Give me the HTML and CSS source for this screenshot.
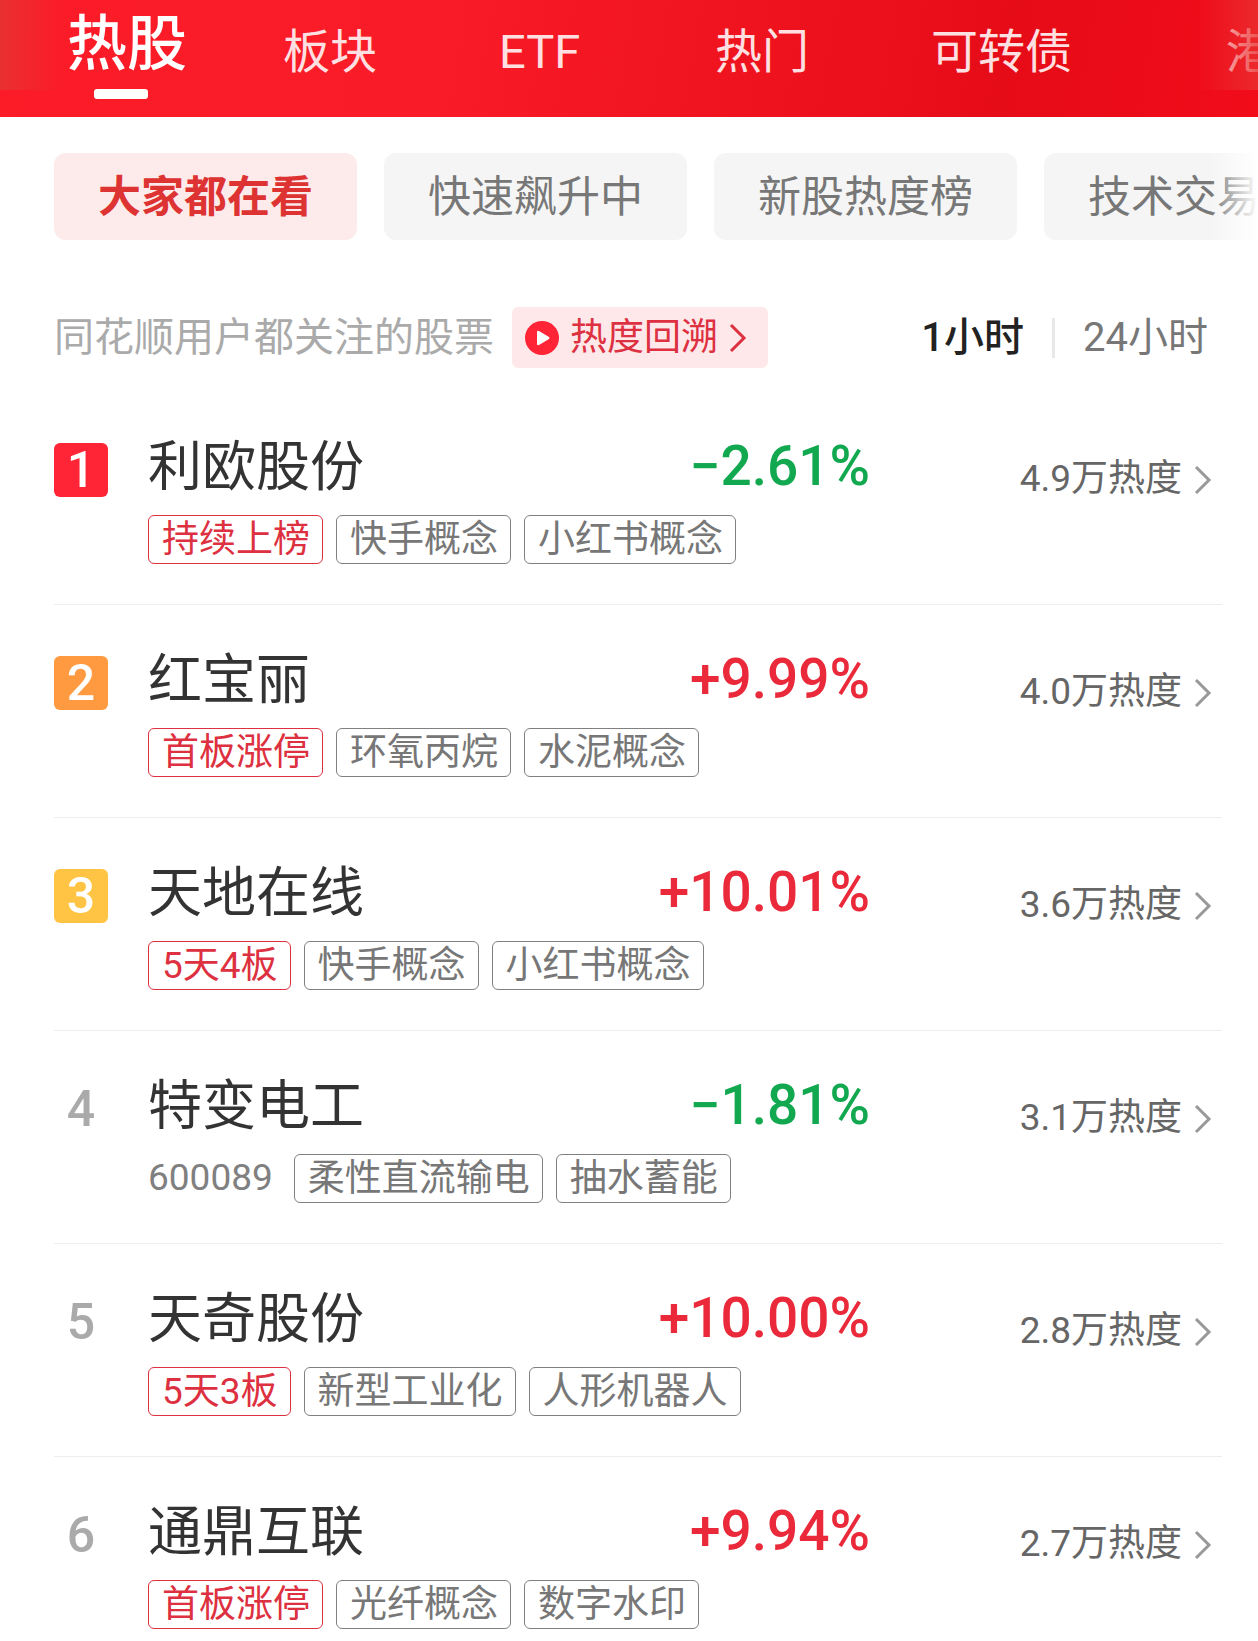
FILE: index.html
```html
<!DOCTYPE html>
<html lang="zh-CN">
<head>
    <meta charset="UTF-8">
    <meta name="viewport" content="width=device-width, initial-scale=1.0">
    <title>热股</title>
    <link rel="stylesheet" href="styles.css">
</head>
<body>
    <svg class="defs" width="0" height="0" aria-hidden="true">
        <symbol id="arrow" viewBox="0 0 18 30">
            <path d="M2 2 L15 15 L2 28" fill="none" stroke="currentColor" stroke-width="3"/>
        </symbol>
    </svg>

    <header class="topbar">
        <nav class="tabs">
            <a class="tab active" href="#hot">热股</a>
            <a class="tab" href="#sector">板块</a>
            <a class="tab" href="#etf">ETF</a>
            <a class="tab" href="#popular">热门</a>
            <a class="tab wide" href="#bond">可转债</a>
            <a class="tab" href="#hk">港股</a>
        </nav>
    </header>

    <main>
        <div class="chips">
            <button class="chip active">大家都在看</button>
            <button class="chip">快速飙升中</button>
            <button class="chip">新股热度榜</button>
            <button class="chip">技术交易派</button>
        </div>

        <div class="toolbar">
            <p class="desc">同花顺用户都关注的股票</p>
            <button class="replay">
                <svg class="play" viewBox="0 0 34 34" aria-hidden="true">
                    <circle cx="17" cy="17" r="17" fill="#ff2436"/>
                    <path d="M12 11 Q12 9 14 10 L24 16 Q25 17 24 18 L14 24 Q12 25 12 23 Z" fill="#fff"/>
                </svg>
                <span>热度回溯</span>
                <svg class="arrow" aria-hidden="true"><use href="#arrow"/></svg>
            </button>
            <div class="period">
                <button class="period-btn active">1小时</button>
                <button class="period-btn">24小时</button>
            </div>
        </div>

        <ol class="list">
            <li class="row">
                <span class="rank rank-1">1</span>
                <div class="stock">
                    <div class="head"><h2 class="name">利欧股份</h2><span class="change down">−2.61%</span></div>
                    <div class="tags"><span class="tag hot">持续上榜</span><span class="tag">快手概念</span><span class="tag">小红书概念</span></div>
                </div>
                <a class="heat" href="#1">4.9万热度<svg class="arrow" aria-hidden="true"><use href="#arrow"/></svg></a>
            </li>
            <li class="row">
                <span class="rank rank-2">2</span>
                <div class="stock">
                    <div class="head"><h2 class="name">红宝丽</h2><span class="change up">+9.99%</span></div>
                    <div class="tags"><span class="tag hot">首板涨停</span><span class="tag">环氧丙烷</span><span class="tag">水泥概念</span></div>
                </div>
                <a class="heat" href="#2">4.0万热度<svg class="arrow" aria-hidden="true"><use href="#arrow"/></svg></a>
            </li>
            <li class="row">
                <span class="rank rank-3">3</span>
                <div class="stock">
                    <div class="head"><h2 class="name">天地在线</h2><span class="change up">+10.01%</span></div>
                    <div class="tags"><span class="tag hot">5天4板</span><span class="tag">快手概念</span><span class="tag">小红书概念</span></div>
                </div>
                <a class="heat" href="#3">3.6万热度<svg class="arrow" aria-hidden="true"><use href="#arrow"/></svg></a>
            </li>
            <li class="row">
                <span class="rank">4</span>
                <div class="stock">
                    <div class="head"><h2 class="name">特变电工</h2><span class="change down">−1.81%</span></div>
                    <div class="tags"><span class="code">600089</span><span class="tag">柔性直流输电</span><span class="tag">抽水蓄能</span></div>
                </div>
                <a class="heat" href="#4">3.1万热度<svg class="arrow" aria-hidden="true"><use href="#arrow"/></svg></a>
            </li>
            <li class="row">
                <span class="rank">5</span>
                <div class="stock">
                    <div class="head"><h2 class="name">天奇股份</h2><span class="change up">+10.00%</span></div>
                    <div class="tags"><span class="tag hot">5天3板</span><span class="tag">新型工业化</span><span class="tag">人形机器人</span></div>
                </div>
                <a class="heat" href="#5">2.8万热度<svg class="arrow" aria-hidden="true"><use href="#arrow"/></svg></a>
            </li>
            <li class="row">
                <span class="rank">6</span>
                <div class="stock">
                    <div class="head"><h2 class="name">通鼎互联</h2><span class="change up">+9.94%</span></div>
                    <div class="tags"><span class="tag hot">首板涨停</span><span class="tag">光纤概念</span><span class="tag">数字水印</span></div>
                </div>
                <a class="heat" href="#6">2.7万热度<svg class="arrow" aria-hidden="true"><use href="#arrow"/></svg></a>
            </li>
        </ol>
    </main>
</body>
</html>
```
FILE: styles.css
```css
* {
    margin: 0;
    padding: 0;
    box-sizing: border-box;
}

body {
    font-family: Roboto, "Noto Sans CJK SC", sans-serif;
    background: #fff;
    color: #333;
    overflow-x: hidden;
}

a {
    color: inherit;
    text-decoration: none;
}

button {
    font-family: inherit;
    border: none;
    background: none;
    cursor: pointer;
    white-space: nowrap;
}

.defs {
    position: absolute;
}

/* top tabs */
.topbar {
    position: relative;
    height: 117px;
    background: linear-gradient(100deg, #fb1c28 0%, #f91b27 35%, #e60c17 80%, #f20c1a 100%);
    overflow: hidden;
}

.topbar::before,
.topbar::after {
    content: "";
    position: absolute;
    top: 0;
    width: 60px;
    height: 90px;
    z-index: 1;
}

.topbar::before {
    left: 0;
    background: linear-gradient(90deg, #e93030, rgba(233, 48, 48, 0));
}

.topbar::after {
    right: 0;
    background: linear-gradient(270deg, rgba(233, 48, 48, 0.8), rgba(233, 48, 48, 0));
}

.tabs {
    display: flex;
    padding-left: 67px;
}

.tab {
    position: relative;
    flex: 0 0 216px;
    line-height: 103px;
    font-size: 47px;
    color: #ffe0e2;
    white-space: nowrap;
}

.tab.wide {
    flex-basis: 295px;
}

.tab.active {
    font-size: 60px;
    line-height: 90px;
    font-weight: 500;
    color: #fff;
}

.tab.active::after {
    content: "";
    position: absolute;
    left: 27px;
    top: 89px;
    width: 54px;
    height: 10px;
    border-radius: 3px;
    background: #fff;
}

/* filter chips */
.chips {
    position: relative;
    display: flex;
    gap: 27px;
    padding: 36px 0 0 54px;
    overflow: hidden;
}

.chips::after {
    content: "";
    position: absolute;
    right: 0;
    top: 0;
    bottom: 0;
    width: 48px;
    background: linear-gradient(90deg, rgba(255, 255, 255, 0), #fff);
}

.chip {
    flex: none;
    width: 303px;
    height: 87px;
    line-height: 84px;
    border-radius: 12px;
    background: #f5f5f5;
    color: #777;
    font-size: 43px;
}

.chip.active {
    background: #fdeaea;
    color: #dd3333;
    font-weight: 700;
}

/* description and period switch */
.toolbar {
    display: flex;
    align-items: center;
    padding: 67px 50px 0 54px;
}

.desc {
    font-size: 40px;
    line-height: 61px;
    color: #aaa;
    white-space: nowrap;
}

.replay {
    display: flex;
    align-items: center;
    gap: 11px;
    height: 61px;
    margin-left: 18px;
    padding: 0 21px 0 13px;
    border-radius: 6px;
    background: #ffe8ea;
    color: #dd3040;
    font-size: 37px;
    line-height: 58px;
}

.play {
    width: 34px;
    height: 34px;
}

.arrow {
    flex: none;
    width: 18px;
    height: 30px;
}

.period {
    display: flex;
    align-items: center;
    margin-left: auto;
}

.period-btn {
    font-size: 40px;
    line-height: 40px;
    color: #777;
}

.period-btn + .period-btn {
    margin-left: 28px;
    padding-left: 28px;
    border-left: 3px solid #e8e8e8;
}

.period-btn.active {
    color: #222;
    font-weight: 500;
}

/* ranking list */
.list {
    list-style: none;
    padding: 24px 36px 0 54px;
}

.row {
    display: grid;
    grid-template-columns: 54px 1fr 352px;
    padding: 40px 0;
    border-bottom: 1px solid #eee;
}

.row:last-child {
    padding-bottom: 12px;
    border-bottom: none;
}

.rank {
    width: 54px;
    height: 54px;
    margin-top: 11px;
    border-radius: 6px;
    font-size: 50px;
    line-height: 54px;
    font-weight: 500;
    text-align: center;
    color: #aaa;
}

.rank-1,
.rank-2,
.rank-3 {
    color: #fff;
}

.rank-1 {
    background: #ff2436;
}

.rank-2 {
    background: #ff9a40;
}

.rank-3 {
    background: #ffc444;
}

.stock {
    padding-left: 40px;
}

.head {
    display: flex;
    justify-content: space-between;
    align-items: flex-start;
}

.name {
    font-size: 54px;
    line-height: 72px;
    font-weight: 400;
}

.change {
    font-size: 55px;
    line-height: 68px;
    font-weight: 500;
}

.up {
    color: #ea2a3a;
}

.down {
    color: #12a850;
}

.tags {
    display: flex;
    gap: 13px;
    margin-top: 11px;
}

.tag {
    height: 49px;
    padding: 0 12px 0 13px;
    border: 1px solid #808080;
    border-radius: 6px;
    font-size: 37px;
    line-height: 47px;
    color: #777;
    white-space: nowrap;
}

.tag.hot {
    border-color: #dd3040;
    color: #dd3040;
}

.code {
    margin-right: 8px;
    font-size: 37px;
    line-height: 47px;
    color: #808080;
}

.heat {
    display: flex;
    align-items: flex-end;
    justify-content: flex-end;
    align-self: start;
    gap: 12px;
    margin-top: 31px;
    padding-right: 10px;
    font-size: 37px;
    line-height: 32px;
    color: #666;
}

.heat .arrow {
    color: #999;
}
```
